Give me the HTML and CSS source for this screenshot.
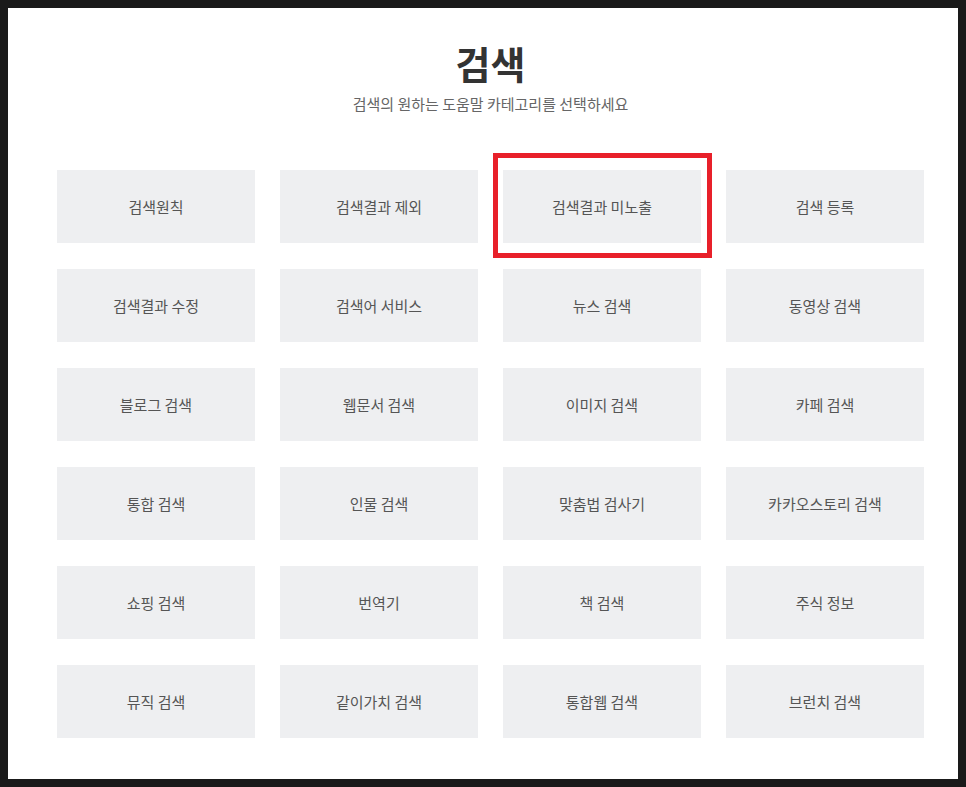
FILE: index.html
```html
<html>
	<head>
		<title>검색</title>
		<meta charset="UTF-8">
		<meta name="viewport" content="width=device-width, initial-scale=1">
		<link rel="stylesheet" href="styles.css">
	</head>
	<body>
		<div id="page">
			<div class="content">
				<div class="intro">
					<h1>검색</h1>
					<p>검색의 원하는 도움말 카테고리를 선택하세요</p>
				</div>
				<ul class="topics">
					<li><a href="#">검색원칙</a></li>
					<li><a href="#">검색결과 제외</a></li>
					<li class="picked"><a href="#">검색결과 미노출</a><span class="mark"></span></li>
					<li><a href="#">검색 등록</a></li>
					<li><a href="#">검색결과 수정</a></li>
					<li><a href="#">검색어 서비스</a></li>
					<li><a href="#">뉴스 검색</a></li>
					<li><a href="#">동영상 검색</a></li>
					<li><a href="#">블로그 검색</a></li>
					<li><a href="#">웹문서 검색</a></li>
					<li><a href="#">이미지 검색</a></li>
					<li><a href="#">카페 검색</a></li>
					<li><a href="#">통합 검색</a></li>
					<li><a href="#">인물 검색</a></li>
					<li><a href="#">맞춤법 검사기</a></li>
					<li><a href="#">카카오스토리 검색</a></li>
					<li><a href="#">쇼핑 검색</a></li>
					<li><a href="#">번역기</a></li>
					<li><a href="#">책 검색</a></li>
					<li><a href="#">주식 정보</a></li>
					<li><a href="#">뮤직 검색</a></li>
					<li><a href="#">같이가치 검색</a></li>
					<li><a href="#">통합웹 검색</a></li>
					<li><a href="#">브런치 검색</a></li>
				</ul>
			</div>
		</div>
	</body>
</html>
```

FILE: styles.css
```css
body {
	margin: 0;
	padding: 8px;
	background: #1a1a1a;
	font-family: "Noto Sans CJK KR", "Noto Sans", sans-serif;
}
#page {
	background: #fff;
	height: 771px;
	box-sizing: border-box;
	padding-top: 30px;
}
.content {
	width: 867px;
	margin-left: 49px;
}
.intro {
	text-align: center;
}
.intro h1 {
	margin: 0;
	font-size: 38px;
	line-height: 50px;
	font-weight: bold;
	color: #333;
}
.intro p {
	margin: 6px 0 0;
	font-size: 15px;
	line-height: 20px;
	color: #666;
}
.topics {
	list-style: none;
	margin: 56px 0 0;
	padding: 0;
	display: grid;
	grid-template-columns: repeat(4, 198px);
	grid-auto-rows: 73px;
	gap: 26px 25px;
}
.topics li {
	background: #eeeff1;
}
.topics a {
	display: flex;
	align-items: center;
	justify-content: center;
	height: 100%;
	font-size: 15px;
	color: #555;
	text-decoration: none;
}
.topics .picked {
	position: relative;
}
.picked .mark {
	position: absolute;
	top: -17px;
	left: -10px;
	right: -11px;
	bottom: -15px;
	border: 5px solid #e8202a;
	pointer-events: none;
}
```
